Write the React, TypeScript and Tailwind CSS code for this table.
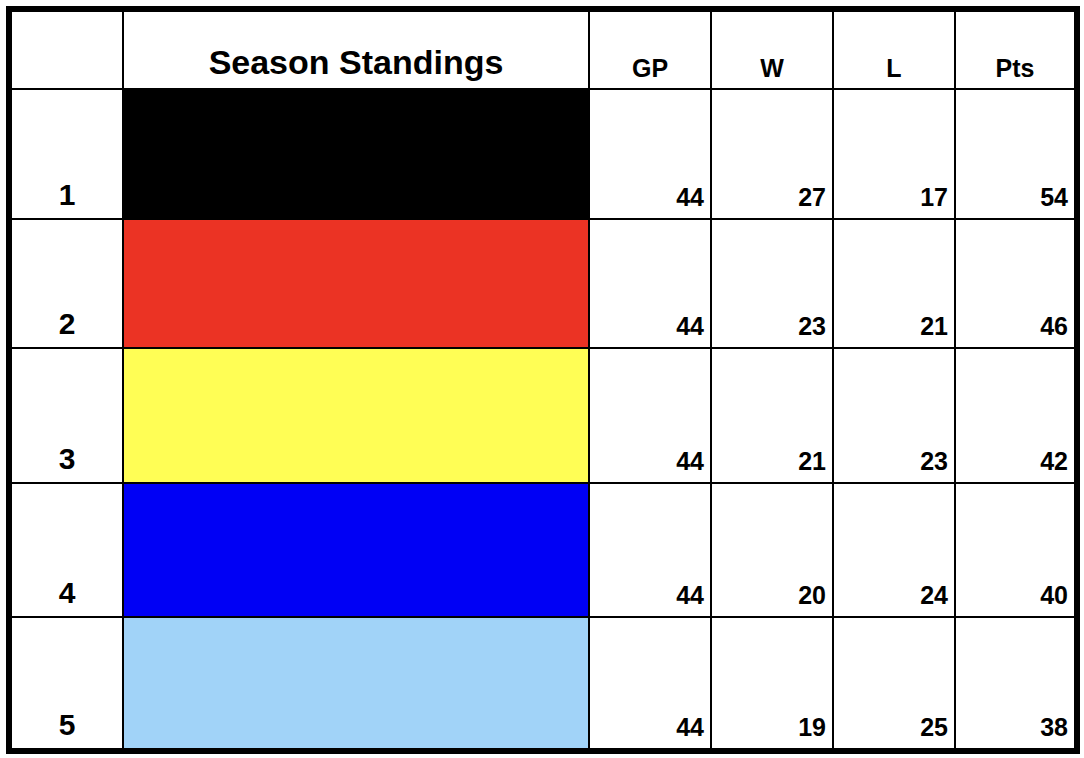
const rows = [
  { rank: 1, color: 'bg-black', gp: 44, w: 27, l: 17, pts: 54 },
  { rank: 2, color: 'bg-[#eb3324]', gp: 44, w: 23, l: 21, pts: 46 },
  { rank: 3, color: 'bg-[#fffe55]', gp: 44, w: 21, l: 23, pts: 42 },
  { rank: 4, color: 'bg-[#0000f5]', gp: 44, w: 20, l: 24, pts: 40 },
  { rank: 5, color: 'bg-[#a1d3f8]', gp: 44, w: 19, l: 25, pts: 38 },
];

const Num = ({ value }: { value: number }) => (
  <div className="bg-white flex items-end justify-end pr-[6px] pb-[8px] text-[25px] leading-none font-bold">
    {value}
  </div>
);

const Head = ({ label }: { label: string }) => (
  <div className="bg-white flex items-end justify-center pb-[7px] text-[25px] leading-none font-bold">
    {label}
  </div>
);

export default function App() {
  return (
    <div className="w-[1084px] h-[758px] bg-white p-[6px] text-black font-['Liberation_Sans',Arial,sans-serif]">
      <div className="w-[1074px] h-[748px] border-[6px] border-black bg-black">
        <div className="grid grid-cols-[110px_464px_120px_120px_120px_118px] grid-rows-[76px_128px_127px_133px_132px_130px] gap-[2px] h-full">
          <div className="bg-white" />
          <div className="bg-white flex items-end justify-center pb-[9px] text-[34px] leading-none font-bold">
            Season Standings
          </div>
          <Head label="GP" />
          <Head label="W" />
          <Head label="L" />
          <Head label="Pts" />

          {rows.map((r) => (
            <div key={r.rank} className="contents">
              <div className="bg-white flex items-end justify-center pb-[8px] text-[30px] leading-none font-bold">
                {r.rank}
              </div>
              <div className={r.color} />
              <Num value={r.gp} />
              <Num value={r.w} />
              <Num value={r.l} />
              <Num value={r.pts} />
            </div>
          ))}
        </div>
      </div>
    </div>
  );
}
